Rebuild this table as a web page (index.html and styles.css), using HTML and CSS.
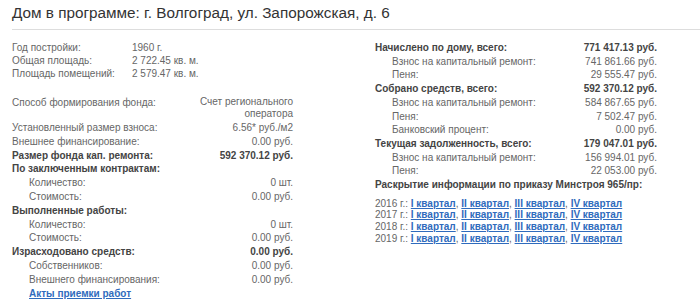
FILE: index.html
```html
<!DOCTYPE html>
<html lang="ru">
<head>
<meta charset="utf-8">
<link rel="stylesheet" href="styles.css">
</head>
<body>
<div class="page">
  <h1 class="title">Дом в программе: г. Волгоград, ул. Запорожская, д. 6</h1>
  <div class="cols">
    <div class="col-left">
      <div class="info">
        <span class="lbl">Год постройки:</span><span class="val">1960 г.</span>
        <span class="lbl">Общая площадь:</span><span class="val">2 722.45 кв. м.</span>
        <span class="lbl">Площадь помещений:</span><span class="val">2 579.47 кв. м.</span>
      </div>
      <div class="fund">
        <div class="row"><span class="lbl">Способ формирования фонда:</span><span class="num multi">Счет регионального<br>оператора</span></div>
        <div class="row"><span class="lbl">Установленный размер взноса:</span><span class="num">6.56* руб./м2</span></div>
        <div class="row"><span class="lbl">Внешнее финансирование:</span><span class="num">0.00 руб.</span></div>
        <div class="row b"><span class="lbl">Размер фонда кап. ремонта:</span><span class="num">592 370.12 руб.</span></div>
        <div class="row b"><span class="lbl">По заключенным контрактам:</span><span class="num"></span></div>
        <div class="row sub"><span class="lbl">Количество:</span><span class="num">0 шт.</span></div>
        <div class="row sub"><span class="lbl">Стоимость:</span><span class="num">0.00 руб.</span></div>
        <div class="row b"><span class="lbl">Выполненные работы:</span><span class="num"></span></div>
        <div class="row sub"><span class="lbl">Количество:</span><span class="num">0 шт.</span></div>
        <div class="row sub"><span class="lbl">Стоимость:</span><span class="num">0.00 руб.</span></div>
        <div class="row b"><span class="lbl">Израсходовано средств:</span><span class="num">0.00 руб.</span></div>
        <div class="row sub"><span class="lbl">Собственников:</span><span class="num">0.00 руб.</span></div>
        <div class="row sub"><span class="lbl">Внешнего финансирования:</span><span class="num">0.00 руб.</span></div>
        <div class="row sub"><a class="link" href="#">Акты приемки работ</a></div>
      </div>
    </div>
    <div class="col-right">
      <div class="fund right">
        <div class="row b"><span class="lbl">Начислено по дому, всего:</span><span class="num">771 417.13 руб.</span></div>
        <div class="row sub"><span class="lbl">Взнос на капитальный ремонт:</span><span class="num">741 861.66 руб.</span></div>
        <div class="row sub"><span class="lbl">Пеня:</span><span class="num">29 555.47 руб.</span></div>
        <div class="row b"><span class="lbl">Собрано средств, всего:</span><span class="num">592 370.12 руб.</span></div>
        <div class="row sub"><span class="lbl">Взнос на капитальный ремонт:</span><span class="num">584 867.65 руб.</span></div>
        <div class="row sub"><span class="lbl">Пеня:</span><span class="num">7 502.47 руб.</span></div>
        <div class="row sub"><span class="lbl">Банковский процент:</span><span class="num">0.00 руб.</span></div>
        <div class="row b"><span class="lbl">Текущая задолженность, всего:</span><span class="num">179 047.01 руб.</span></div>
        <div class="row sub"><span class="lbl">Взнос на капитальный ремонт:</span><span class="num">156 994.01 руб.</span></div>
        <div class="row sub"><span class="lbl">Пеня:</span><span class="num">22 053.00 руб.</span></div>
        <div class="row b"><span class="lbl">Раскрытие информации по приказу Минстроя 965/пр:</span></div>
      </div>
      <div class="years">
        <div>2016 г.: <a class="link" href="#">I квартал</a>, <a class="link" href="#">II квартал</a>, <a class="link" href="#">III квартал</a>, <a class="link" href="#">IV квартал</a></div>
        <div>2017 г.: <a class="link" href="#">I квартал</a>, <a class="link" href="#">II квартал</a>, <a class="link" href="#">III квартал</a>, <a class="link" href="#">IV квартал</a></div>
        <div>2018 г.: <a class="link" href="#">I квартал</a>, <a class="link" href="#">II квартал</a>, <a class="link" href="#">III квартал</a>, <a class="link" href="#">IV квартал</a></div>
        <div>2019 г.: <a class="link" href="#">I квартал</a>, <a class="link" href="#">II квартал</a>, <a class="link" href="#">III квартал</a>, <a class="link" href="#">IV квартал</a></div>
      </div>
    </div>
  </div>
</div>
</body>
</html>
```
FILE: styles.css
```css
html, body {
  margin: 0;
  padding: 0;
  background: #fff;
}
.page {
  font-family: "Liberation Sans", Arial, sans-serif;
  font-size: 10px;
  color: #666;
  padding: 2px 0 0 12px;
}
.title {
  margin: 0;
  font-size: 15.3px;
  font-weight: normal;
  line-height: 22px;
  color: #333;
  padding-bottom: 5px;
  border-bottom: 1px solid #ddd;
}
.cols {
  display: flex;
  padding-top: 11px;
}
.col-left {
  width: 281px;
}
.col-right {
  margin-left: 82px;
  width: 282px;
}
.info {
  display: grid;
  grid-template-columns: 120px auto;
  line-height: 13px;
  white-space: nowrap;
}
.fund {
  margin-top: 16px;
}
.fund.right {
  margin-top: 0;
}
.row {
  display: flex;
  justify-content: space-between;
  line-height: 13.8px;
  white-space: nowrap;
}
.row .num {
  text-align: right;
}
.num.multi {
  line-height: 12px;
  padding-bottom: 1px;
}
.row.b {
  font-weight: bold;
  color: #444;
}
.row.sub {
  padding-left: 17px;
}
.right .row {
  line-height: 13.7px;
}
.link {
  color: #2f6bbd;
  font-weight: bold;
}
.years {
  margin-top: 6px;
  line-height: 11.7px;
  white-space: nowrap;
}
```
